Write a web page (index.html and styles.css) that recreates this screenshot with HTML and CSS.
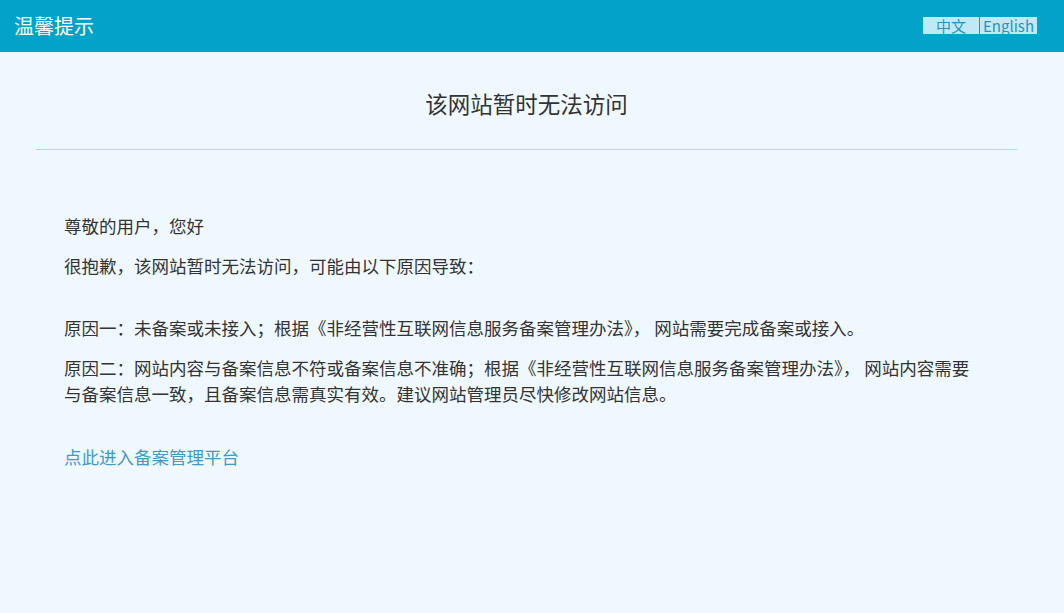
FILE: index.html
```html
<!DOCTYPE html>
<html lang="zh-CN">
<head>
    <meta charset="UTF-8">
    <meta name="viewport" content="width=device-width, initial-scale=1.0">
    <title>温馨提示</title>
    <link rel="stylesheet" href="styles.css">
</head>
<body>
    <div class="header">
        <div class="header-title">温馨提示</div>
        <div class="lang">
            <span class="lang-item lang-zh">中文</span>
            <span class="lang-item">English</span>
        </div>
    </div>

    <div class="main">
        <div class="main-title">
            <h1>该网站暂时无法访问</h1>
        </div>
        <div class="content">
            <p>尊敬的用户，您好</p>
            <p>很抱歉，该网站暂时无法访问，可能由以下原因导致：</p>
            <p class="reason-first">原因一：未备案或未接入；根据《非经营性互联网信息服务备案管理办法》， 网站需要完成备案或接入。</p>
            <p>原因二：网站内容与备案信息不符或备案信息不准确；根据《非经营性互联网信息服务备案管理办法》， 网站内容需要与备案信息一致，且备案信息需真实有效。建议网站管理员尽快修改网站信息。</p>
            <a class="link" href="#">点此进入备案管理平台</a>
        </div>
    </div>
</body>
</html>
```

FILE: styles.css
```css
* {
    margin: 0;
    padding: 0;
    box-sizing: border-box;
}

body {
    font-family: "Noto Sans CJK SC", "Noto Sans", sans-serif;
    background: #f0f8ff;
    color: #333;
    font-size: 17.5px;
}

.header {
    height: 52px;
    background: #03a3c9;
    display: flex;
    justify-content: space-between;
    align-items: center;
    padding: 0 27px 0 14px;
}

.header-title {
    color: #fff;
    font-size: 20px;
    line-height: 26px;
}

.lang {
    display: flex;
    gap: 1px;
    margin-top: -1px;
}

.lang-item {
    background: #c0e9f5;
    color: #1f96c2;
    font-size: 15px;
    line-height: 17px;
    height: 17px;
    padding: 0 3px;
}

.lang-zh {
    width: 56px;
    text-align: center;
}

.main {
    margin: 0 47px 0 36px;
}

.main-title {
    border-bottom: 1px solid #9fe1ea;
    padding: 36px 0 31px;
    text-align: center;
}

.main-title h1 {
    font-size: 22.5px;
    font-weight: normal;
    line-height: 30px;
    color: #333;
}

.content {
    padding: 63px 36px 0 28px;
}

.content p {
    line-height: 26px;
    margin-bottom: 14px;
}

.content .reason-first {
    margin-top: 36px;
}

.link {
    display: inline-block;
    margin-top: 23px;
    line-height: 26px;
    color: #3b9bcf;
    text-decoration: none;
}
```
